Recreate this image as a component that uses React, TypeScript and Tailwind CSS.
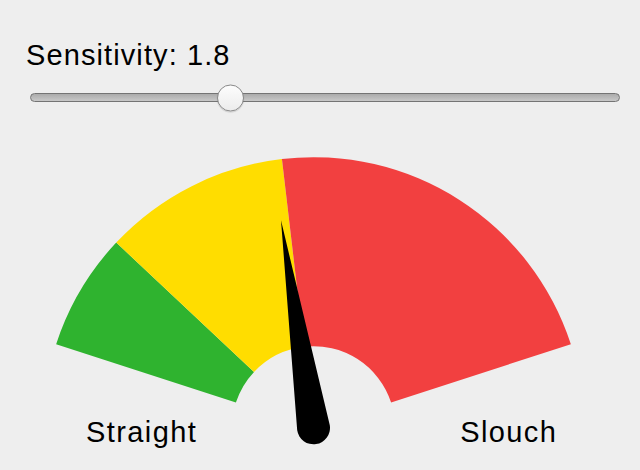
const CX = 313.5;
const CY = 427.8;
const R_IN = 81.6;
const R_OUT = 270.6;

const zones = [
  { key: 'green', from: -72, to: -46.8, color: '#2fb32f' },
  { key: 'yellow', from: -46.8, to: -6.7, color: '#ffdd00' },
  { key: 'red', from: -6.7, to: 72, color: '#f24040' },
];

function pt(r: number, deg: number): [number, number] {
  const a = (deg * Math.PI) / 180;
  return [CX + r * Math.sin(a), CY - r * Math.cos(a)];
}

function sector(from: number, to: number): string {
  const [x1, y1] = pt(R_OUT, from);
  const [x2, y2] = pt(R_OUT, to);
  const [x3, y3] = pt(R_IN, to);
  const [x4, y4] = pt(R_IN, from);
  const large = to - from > 180 ? 1 : 0;
  return `M${x1} ${y1} A${R_OUT} ${R_OUT} 0 ${large} 1 ${x2} ${y2} L${x3} ${y3} A${R_IN} ${R_IN} 0 ${large} 0 ${x4} ${y4} Z`;
}

function Needle({ angle }: { angle: number }) {
  const r = 16.5;
  const len = 210;
  return (
    <g transform={`rotate(${angle} ${CX} ${CY})`}>
      <path
        d={`M${CX - r} ${CY} L${CX} ${CY - len} L${CX + r} ${CY} A${r} ${r} 0 0 1 ${CX - r} ${CY} Z`}
        fill="#000"
      />
    </g>
  );
}

function Slider() {
  return (
    <div className="ml-[30px] mt-[14px] flex h-[27px] w-[590px] items-center">
      <div className="relative h-[9px] w-full rounded-full border border-[#747474] bg-gradient-to-b from-[#ababab] to-[#c8c8c8]">
        <div className="absolute left-[186px] top-1/2 h-[27px] w-[27px] -translate-y-1/2 rounded-full border-[1.5px] border-[#8a8a8a] bg-gradient-to-b from-[#fdfdfd] to-[#ececec] shadow-[0_1px_1px_rgba(0,0,0,0.15)]" />
      </div>
    </div>
  );
}

export default function App() {
  return (
    <div
      className="h-[470px] w-[640px] overflow-hidden bg-[#eeeeee] text-black"
      style={{ fontFamily: '"Liberation Sans", Arial, sans-serif' }}
    >
      <div className="pl-[26px] pt-[41px] text-[29px] leading-[29px] tracking-[1.1px]">Sensitivity: 1.8</div>
      <Slider />
      <div className="grid h-[359px] w-[640px]">
        <svg className="[grid-area:1/1]" width="640" height="359" viewBox="0 111 640 359">
          {zones.map((z) => (
            <path key={z.key} d={sector(z.from, z.to)} fill={z.color} />
          ))}
          <Needle angle={-8.9} />
        </svg>
        <div className="flex items-start [grid-area:1/1] pt-[307px] text-[29px] leading-[29px] tracking-[1.4px]">
          <span className="ml-[86px]">Straight</span>
          <span className="ml-[263px]">Slouch</span>
        </div>
      </div>
    </div>
  );
}
